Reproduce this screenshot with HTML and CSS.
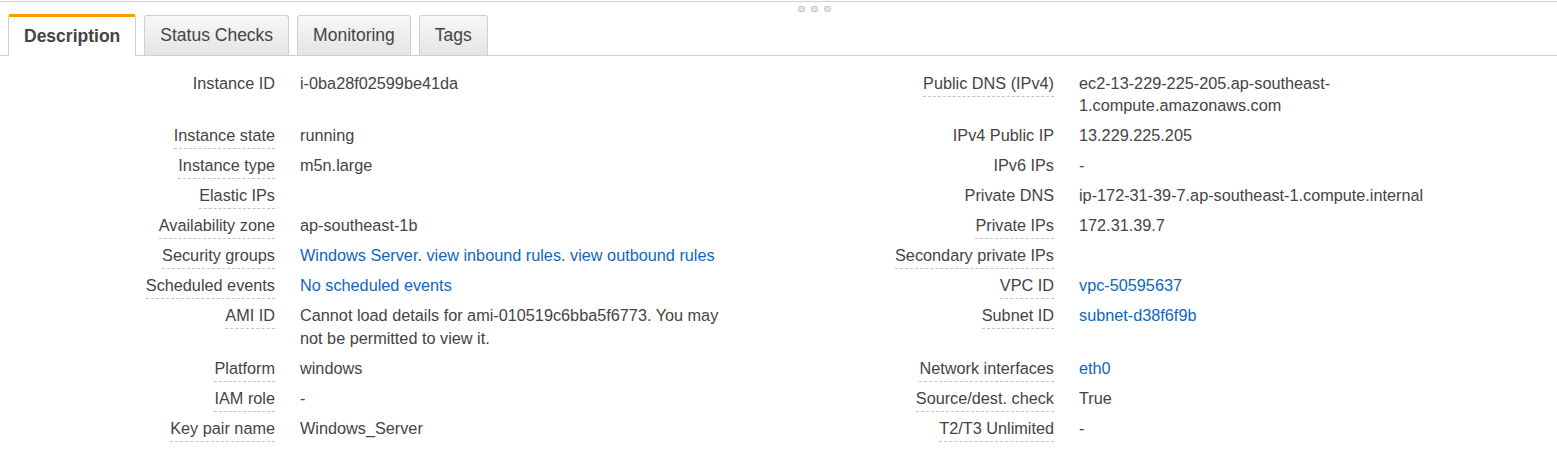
FILE: index.html
```html
<!DOCTYPE html>
<html>
<head>
<meta charset="utf-8">
<link rel="stylesheet" href="styles.css">
</head>
<body>
<div class="panel">
  <div class="grip"><span></span><span></span><span></span></div>
  <div class="tabs">
    <div class="tab active">Description</div>
    <div class="tab">Status Checks</div>
    <div class="tab">Monitoring</div>
    <div class="tab">Tags</div>
  </div>
  <div class="details">
    <div class="label"><span class="plain">Instance ID</span></div>
    <div class="value">i-0ba28f02599be41da</div>
    <div class="label"><span>Public DNS (IPv4)</span></div>
    <div class="value">ec2-13-229-225-205.ap-southeast-1.compute.amazonaws.com</div>

    <div class="label"><span>Instance state</span></div>
    <div class="value">running</div>
    <div class="label"><span class="plain">IPv4 Public IP</span></div>
    <div class="value">13.229.225.205</div>

    <div class="label"><span>Instance type</span></div>
    <div class="value">m5n.large</div>
    <div class="label"><span class="plain">IPv6 IPs</span></div>
    <div class="value">-</div>

    <div class="label"><span>Elastic IPs</span></div>
    <div class="value"></div>
    <div class="label"><span class="plain">Private DNS</span></div>
    <div class="value">ip-172-31-39-7.ap-southeast-1.compute.internal</div>

    <div class="label"><span>Availability zone</span></div>
    <div class="value">ap-southeast-1b</div>
    <div class="label"><span>Private IPs</span></div>
    <div class="value">172.31.39.7</div>

    <div class="label"><span>Security groups</span></div>
    <div class="value"><a class="link">Windows Server</a>. <a class="link">view inbound rules</a>. <a class="link">view outbound rules</a></div>
    <div class="label"><span>Secondary private IPs</span></div>
    <div class="value"></div>

    <div class="label"><span>Scheduled events</span></div>
    <div class="value"><a class="link">No scheduled events</a></div>
    <div class="label"><span>VPC ID</span></div>
    <div class="value"><a class="link">vpc-50595637</a></div>

    <div class="label"><span>AMI ID</span></div>
    <div class="value">Cannot load details for ami-010519c6bba5f6773. You may not be permitted to view it.</div>
    <div class="label"><span>Subnet ID</span></div>
    <div class="value"><a class="link">subnet-d38f6f9b</a></div>

    <div class="label"><span>Platform</span></div>
    <div class="value">windows</div>
    <div class="label"><span>Network interfaces</span></div>
    <div class="value"><a class="link">eth0</a></div>

    <div class="label"><span>IAM role</span></div>
    <div class="value">-</div>
    <div class="label"><span>Source/dest. check</span></div>
    <div class="value">True</div>

    <div class="label"><span>Key pair name</span></div>
    <div class="value">Windows_Server</div>
    <div class="label"><span>T2/T3 Unlimited</span></div>
    <div class="value">-</div>
  </div>
</div>
</body>
</html>
```

FILE: styles.css
```css
html, body {
  margin: 0;
  padding: 0;
  background: #fff;
}

body {
  font-family: "Liberation Sans", Arial, sans-serif;
  color: #444;
}

.panel {
  position: relative;
  margin-top: 1px;
  border-top: 1px solid #cfcfcf;
  padding-top: 12px;
}

.grip {
  position: absolute;
  top: 4px;
  left: 798px;
  display: flex;
  gap: 6px;
}

.grip span {
  width: 5px;
  height: 4px;
  border: 1px solid #c8c8c8;
  border-radius: 2px;
  background: #e6e6e6;
}

.tabs {
  display: flex;
  align-items: flex-end;
  gap: 8px;
  padding-left: 8px;
  height: 41px;
  border-bottom: 1px solid #cfcfcf;
}

.tab {
  box-sizing: border-box;
  height: 40px;
  padding: 0 15px;
  display: flex;
  align-items: center;
  font-size: 17.5px;
  color: #444;
  border: 1px solid #cfcfcf;
  border-bottom: none;
  border-radius: 3px 3px 0 0;
  background: linear-gradient(#f8f8f8, #e4e4e4);
}

.tab.active {
  height: 42px;
  margin-bottom: -1px;
  padding: 0 15px 1px;
  font-weight: bold;
  background: #fff;
  border-top: 3px solid #ff9900;
  color: #444;
}

.details {
  display: grid;
  grid-template-columns: 275px 504px 275px 1fr;
  padding-top: 12px;
  font-size: 16.25px;
  line-height: 22.5px;
}

.label,
.value {
  padding: 3.75px 0;
}

.label {
  text-align: right;
}

.label span {
  padding-bottom: 4px;
  border-bottom: 1px dashed #c4c4c4;
}

.label span.plain {
  border-bottom: none;
}

.value {
  padding-left: 25px;
  padding-right: 39px;
}

.link {
  color: #1166bb;
  text-decoration: none;
}
```
